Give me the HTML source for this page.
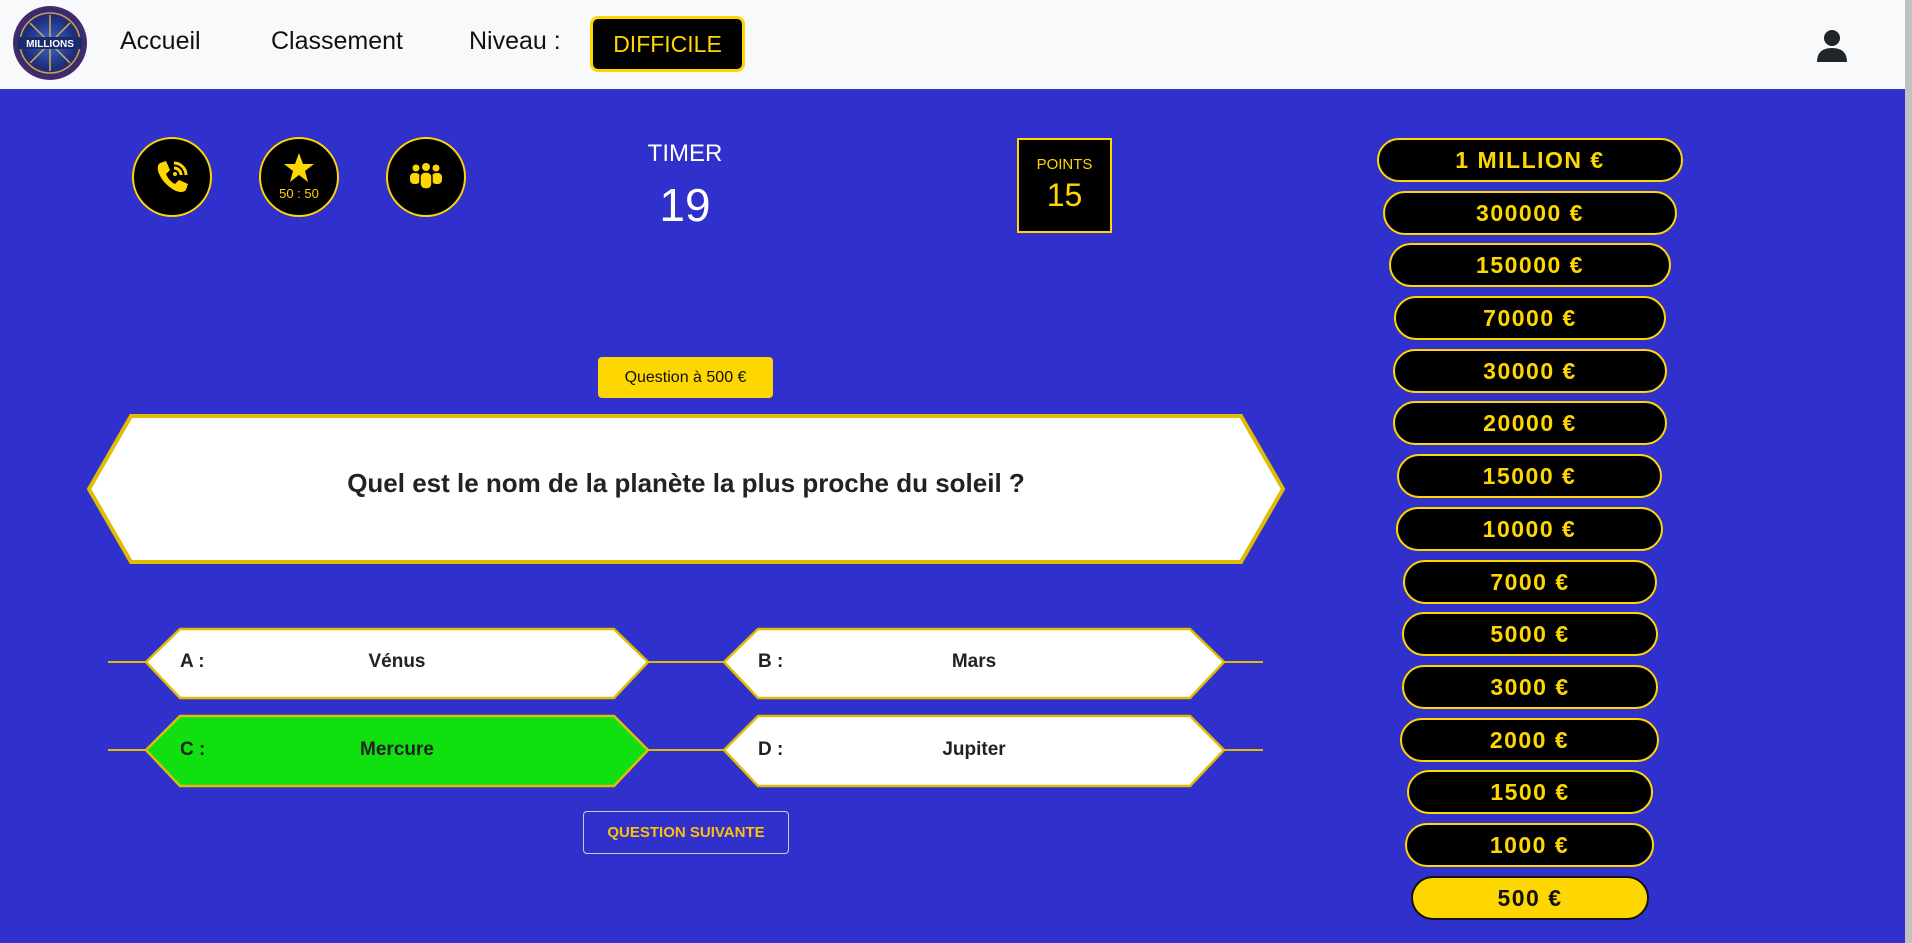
<!DOCTYPE html>
<html><head><meta charset="utf-8">
<style>
*{margin:0;padding:0;box-sizing:border-box}
html,body{width:1912px;height:943px;overflow:hidden;background:#3030cc;font-family:"Liberation Sans",sans-serif}
.abs{position:absolute}
.nav{position:absolute;left:0;top:0;width:1905px;height:89px;background:#f8f9fa}
.scroll{position:absolute;left:1905px;top:0;width:7px;height:943px;background:#c1c1c1}
.navlink{position:absolute;top:27px;font-size:25px;color:#111}
.diff{position:absolute;left:590px;top:16px;width:155px;height:56px;background:#000;border:3px solid #ffd700;border-radius:8px;color:#ffd700;font-size:23px;text-align:center;line-height:50px}
.life{position:absolute;top:137px;width:80px;height:80px;border-radius:50%;background:#000;border:2px solid #ffd700}
.rung{position:absolute;height:44px;border:2px solid #ffd700;border-radius:22px;background:#000;color:#ffd700;font-weight:bold;font-size:23px;letter-spacing:1.5px;text-align:center;line-height:40px}
.ans{position:absolute;font-weight:bold;font-size:19px;color:#222}
</style></head><body>
<div class="nav">
  <svg class="abs" style="left:12px;top:5px" width="76" height="76" viewBox="0 0 76 76">
    <defs><radialGradient id="g" cx="50%" cy="50%" r="50%"><stop offset="0" stop-color="#3a6ad0"/><stop offset="0.7" stop-color="#1d2d7a"/><stop offset="1" stop-color="#4a2a6a"/></radialGradient></defs>
    <circle cx="38" cy="38" r="37" fill="url(#g)"/>
    <circle cx="38" cy="38" r="30" fill="none" stroke="#c9a34a" stroke-width="1.5"/>
    <path d="M38 10 L38 66 M10 38 L66 38 M18 18 L58 58 M58 18 L18 58" stroke="#d4b04c" stroke-width="1.5"/>
    <rect x="6" y="32" width="64" height="12" fill="#1a2a6a"/>
    <text x="38" y="42" font-size="10" font-weight="bold" fill="#fff" text-anchor="middle" font-family="Liberation Sans">MILLIONS</text>
  </svg>
  <div class="navlink" style="left:120px">Accueil</div>
  <div class="navlink" style="left:271px">Classement</div>
  <div class="navlink" style="left:469px">Niveau :</div>
  <div class="diff">DIFFICILE</div>
  <svg class="abs" style="left:1817px;top:30px" width="30" height="32" viewBox="0 0 30 32"><circle cx="15" cy="8" r="8" fill="#212529"/><path d="M0 32 Q0 18 15 18 Q30 18 30 32 Z" fill="#212529"/></svg>
</div>
<div class="scroll"></div>

<div class="life" style="left:132px"><svg width="76" height="76" viewBox="0 0 76 76"><path d="M26 24 L32 22 L36 31 L32 35 Q35 42 41 45 L45 41 L54 45 L52 51 Q48 55 40 51 Q28 44 24 32 Q23 26 26 24Z" fill="#ffd700"/><path d="M40 24 A12 12 0 0 1 52 36 M40 29 A7 7 0 0 1 47 36" stroke="#ffd700" stroke-width="3" fill="none"/><circle cx="41" cy="35" r="2" fill="#ffd700"/></svg></div>
<div class="life" style="left:259px"><svg width="76" height="76" viewBox="0 0 76 76"><path d="M38 14 L42 25 L53 25 L44 32 L47 43 L38 36 L29 43 L32 32 L23 25 L34 25Z" fill="#ffd700"/><text x="38" y="59" font-size="13" fill="#ffd700" text-anchor="middle" font-family="Liberation Sans">50 : 50</text></svg></div>
<div class="life" style="left:386px"><svg width="76" height="76" viewBox="0 0 76 76"><circle cx="28" cy="29" r="3.5" fill="#ffd700"/><circle cx="38" cy="28" r="4" fill="#ffd700"/><circle cx="48" cy="29" r="3.5" fill="#ffd700"/><rect x="22" y="34" width="10" height="11" rx="4" fill="#ffd700"/><rect x="44" y="34" width="10" height="11" rx="4" fill="#ffd700"/><rect x="32" y="33" width="12" height="17" rx="5" fill="#ffd700" stroke="#000" stroke-width="1.5"/></svg></div>

<div class="abs" style="left:635px;top:140px;width:100px;text-align:center;color:#fff;font-size:24px">TIMER</div>
<div class="abs" style="left:635px;top:178px;width:100px;text-align:center;color:#fff;font-size:46px">19</div>

<div class="abs" style="left:1017px;top:138px;width:95px;height:95px;background:#000;border:2px solid #ffd700;color:#ffd700;text-align:center">
  <div style="font-size:15px;margin-top:16px">POINTS</div>
  <div style="font-size:32px;margin-top:4px">15</div>
</div>

<div class="abs" style="left:598px;top:357px;width:175px;height:41px;background:#ffd700;border-radius:4px;font-size:16px;text-align:center;line-height:41px;color:#111">Question à 500 €</div>

<svg class="abs" style="left:0;top:0" width="1300" height="943">
  <polygon points="131,416 1241,416 1283,489 1241,562 131,562 89,489" fill="#fff" stroke="#e0bd00" stroke-width="4"/>
  <line x1="108" y1="662" x2="1263" y2="662" stroke="#e0bd00" stroke-width="2"/>
  <line x1="108" y1="750" x2="1263" y2="750" stroke="#e0bd00" stroke-width="2"/>
  <polygon points="180,629 614,629 648,662 614,698 180,698 146,662" fill="#fff" stroke="#e0bd00" stroke-width="2.5"/>
  <polygon points="758,629 1190,629 1224,662 1190,698 758,698 724,662" fill="#fff" stroke="#e0bd00" stroke-width="2.5"/>
  <polygon points="180,716 614,716 648,750 614,786 180,786 146,750" fill="#10e010" stroke="#e0bd00" stroke-width="2.5"/>
  <polygon points="758,716 1190,716 1224,750 1190,786 758,786 724,750" fill="#fff" stroke="#e0bd00" stroke-width="2.5"/>
</svg>
<div class="abs" style="left:88px;top:468px;width:1196px;text-align:center;font-size:26px;font-weight:bold;color:#222">Quel est le nom de la planète la plus proche du soleil ?</div>
<div class="ans" style="left:180px;top:651px">A :</div><div class="ans" style="left:297px;top:651px;width:200px;text-align:center">Vénus</div>
<div class="ans" style="left:758px;top:651px">B :</div><div class="ans" style="left:874px;top:651px;width:200px;text-align:center">Mars</div>
<div class="ans" style="left:180px;top:739px">C :</div><div class="ans" style="left:297px;top:739px;width:200px;text-align:center">Mercure</div>
<div class="ans" style="left:758px;top:739px">D :</div><div class="ans" style="left:874px;top:739px;width:200px;text-align:center">Jupiter</div>

<div class="abs" style="left:583px;top:811px;width:206px;height:43px;border:1px solid #ccc;border-radius:4px;color:#ffc107;font-weight:bold;font-size:15px;text-align:center;line-height:41px">QUESTION SUIVANTE</div>

<div class="rung" style="left:1377px;top:138px;width:306px">1 MILLION €</div>
<div class="rung" style="left:1383px;top:191px;width:294px">300000 €</div>
<div class="rung" style="left:1389px;top:243px;width:282px">150000 €</div>
<div class="rung" style="left:1394px;top:296px;width:272px">70000 €</div>
<div class="rung" style="left:1393px;top:349px;width:274px">30000 €</div>
<div class="rung" style="left:1393px;top:401px;width:274px">20000 €</div>
<div class="rung" style="left:1397px;top:454px;width:265px">15000 €</div>
<div class="rung" style="left:1396px;top:507px;width:267px">10000 €</div>
<div class="rung" style="left:1403px;top:560px;width:254px">7000 €</div>
<div class="rung" style="left:1402px;top:612px;width:256px">5000 €</div>
<div class="rung" style="left:1402px;top:665px;width:256px">3000 €</div>
<div class="rung" style="left:1400px;top:718px;width:259px">2000 €</div>
<div class="rung" style="left:1407px;top:770px;width:246px">1500 €</div>
<div class="rung" style="left:1405px;top:823px;width:249px">1000 €</div>
<div class="rung" style="left:1411px;top:876px;width:238px;background:#ffd700;color:#111;border-color:#111">500 €</div>
</body></html>
